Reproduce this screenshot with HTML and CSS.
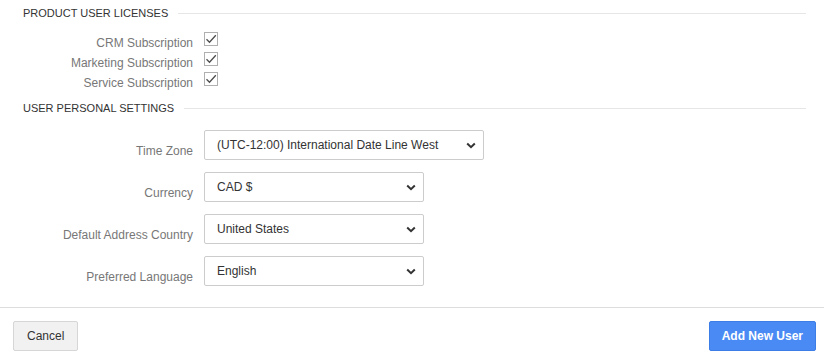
FILE: index.html
```html
<!DOCTYPE html>
<html lang="en">
<head>
<meta charset="utf-8">
<title>Add User</title>
<link rel="stylesheet" href="styles.css">
</head>
<body>
<div class="main">
  <div class="section-title">Product User Licenses</div>
  <div class="check-list">
    <label class="check-row">
      <span class="check-label">CRM Subscription</span>
      <span class="checkbox"><svg viewBox="0 0 12 12" width="12" height="12"><polyline points="1.5,6.2 4.5,9.2 10.8,2.2" fill="none" stroke="#4d4d4d" stroke-width="1.3"/></svg></span>
    </label>
    <label class="check-row">
      <span class="check-label">Marketing Subscription</span>
      <span class="checkbox"><svg viewBox="0 0 12 12" width="12" height="12"><polyline points="1.5,6.2 4.5,9.2 10.8,2.2" fill="none" stroke="#4d4d4d" stroke-width="1.3"/></svg></span>
    </label>
    <label class="check-row">
      <span class="check-label">Service Subscription</span>
      <span class="checkbox"><svg viewBox="0 0 12 12" width="12" height="12"><polyline points="1.5,6.2 4.5,9.2 10.8,2.2" fill="none" stroke="#4d4d4d" stroke-width="1.3"/></svg></span>
    </label>
  </div>

  <div class="section-title second">User Personal Settings</div>
  <div class="form-list">
    <div class="form-row">
      <label class="form-label">Time Zone</label>
      <select class="select wide"><option>(UTC-12:00) International Date Line West</option></select>
    </div>
    <div class="form-row">
      <label class="form-label">Currency</label>
      <select class="select"><option>CAD $</option></select>
    </div>
    <div class="form-row">
      <label class="form-label">Default Address Country</label>
      <select class="select"><option>United States</option></select>
    </div>
    <div class="form-row">
      <label class="form-label">Preferred Language</label>
      <select class="select"><option>English</option></select>
    </div>
  </div>
</div>
<div class="footer">
  <button class="btn btn-default">Cancel</button>
  <button class="btn btn-primary">Add New User</button>
</div>
</body>
</html>
```
FILE: styles.css
```css
html, body {
  margin: 0;
  padding: 0;
  background: #fff;
}
body {
  font-family: "Liberation Sans", Arial, sans-serif;
  color: #333;
}
.main {
  padding: 6px 18px 21px 23px;
}
.section-title {
  display: flex;
  align-items: center;
  gap: 10px;
  font-size: 11px;
  line-height: 15px;
  letter-spacing: 0;
  text-transform: uppercase;
  color: #333;
}
.section-title::after {
  content: "";
  flex: 1;
  height: 1px;
  background: #e6e6e6;
}
.section-title.second {
  margin-top: 11px;
}
.check-list {
  padding-top: 9px;
}
.check-row {
  display: grid;
  grid-template-columns: 170px 14px;
  column-gap: 11px;
  height: 20px;
  align-items: start;
}
.check-label {
  text-align: right;
  font-size: 12px;
  line-height: 14px;
  color: #777;
  padding-top: 6px;
}
.checkbox {
  margin-top: 2px;
  width: 14px;
  height: 14px;
  box-sizing: border-box;
  border: 1px solid #b0b0b0;
  background: #fff;
  display: flex;
  align-items: center;
  justify-content: center;
}
.form-list {
  padding-top: 14px;
}
.form-row {
  display: grid;
  grid-template-columns: 170px auto;
  column-gap: 11px;
  justify-content: start;
  margin-bottom: 12px;
}
.form-row:last-child {
  margin-bottom: 0;
}
.form-label {
  text-align: right;
  font-size: 12px;
  line-height: 14px;
  color: #777;
  padding-top: 14px;
}
.select {
  appearance: none;
  -webkit-appearance: none;
  width: 220px;
  height: 30px;
  box-sizing: border-box;
  border: 1px solid #ccc;
  border-radius: 2px;
  background-color: #fff;
  background-image: url("data:image/svg+xml;utf8,<svg xmlns='http://www.w3.org/2000/svg' width='10' height='7' viewBox='0 0 10 7'><polyline points='1.2,1.5 5,5.2 8.8,1.5' fill='none' stroke='%23333' stroke-width='2'/></svg>");
  background-repeat: no-repeat;
  background-position: right 7px center;
  padding: 0 24px 1px 12px;
  font-family: "Liberation Sans", Arial, sans-serif;
  font-size: 12px;
  color: #333;
  margin: 0;
}
.select.wide {
  width: 280px;
}
.footer {
  border-top: 1px solid #ddd;
  display: flex;
  justify-content: space-between;
  align-items: center;
  padding: 13px 8px 12px 13px;
}
.btn {
  height: 30px;
  box-sizing: border-box;
  border-radius: 2px;
  font-family: "Liberation Sans", Arial, sans-serif;
  font-size: 12px;
  padding: 0 13px;
  margin: 0;
  cursor: pointer;
}
.btn-default {
  background: #f1f1f1;
  border: 1px solid #d6d6d6;
  color: #333;
}
.btn-primary {
  background: #4a8af4;
  border: 1px solid #3c7ee6;
  color: #fff;
  font-weight: bold;
  padding: 0 12px;
}
```
